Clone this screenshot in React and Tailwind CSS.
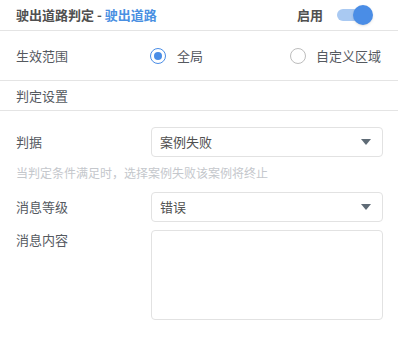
import React, { useState } from 'react';

const App = () => {
  const [enabled, setEnabled] = useState(true);
  const [scope, setScope] = useState('global');

  return (
    <div
      className="w-[398px] h-[337px] bg-white text-[13px] text-[#55595f]"
      style={{ fontFamily: '"Noto Sans CJK SC", "Noto Sans", sans-serif' }}
    >
      {/* header */}
      <div className="h-[31px] flex items-center justify-between pl-4 pr-[24px] border-b border-[#e4e4e4]">
        <div className="font-bold text-[#505050]">
          驶出道路判定 - <span className="text-[#4a90e2]">驶出道路</span>
        </div>
        <div className="flex items-center gap-[14px]">
          <span className="font-bold text-[#505050]">启用</span>
          <button
            onClick={() => setEnabled(!enabled)}
            className="relative w-[37px] h-[20px] flex items-center"
          >
            <span className={`block w-[31px] h-[12px] rounded-full ${enabled ? 'bg-[#a9c9f2]' : 'bg-[#d0d0d0]'}`} />
            <span
              className={`absolute top-0 w-[20px] h-[20px] rounded-full shadow ${enabled ? 'left-[16px] bg-[#4a8de6]' : 'left-0 bg-[#f5f5f5]'}`}
            />
          </button>
        </div>
      </div>

      {/* scope */}
      <div className="h-[50px] flex items-center pl-4 pr-4 border-b border-[#e4e4e4]">
        <span className="w-[134px]">生效范围</span>
        <label className="flex items-center gap-[11px] cursor-pointer" onClick={() => setScope('global')}>
          <span className={`w-[16px] h-[16px] rounded-full border-[1.5px] flex items-center justify-center ${scope === 'global' ? 'border-[#4a8de6]' : 'border-[#bdbdbd]'}`}>
            {scope === 'global' && <span className="w-[8px] h-[8px] rounded-full bg-[#4a8de6]" />}
          </span>
          <span>全局</span>
        </label>
        <label className="ml-auto mr-[1px] flex items-center gap-[10px] cursor-pointer" onClick={() => setScope('custom')}>
          <span className={`w-[16px] h-[16px] rounded-full border-[1.5px] flex items-center justify-center ${scope === 'custom' ? 'border-[#4a8de6]' : 'border-[#bdbdbd]'}`}>
            {scope === 'custom' && <span className="w-[8px] h-[8px] rounded-full bg-[#4a8de6]" />}
          </span>
          <span>自定义区域</span>
        </label>
      </div>

      {/* section title */}
      <div className="h-[30px] flex items-center pl-4 border-b border-[#e4e4e4]">
        <span>判定设置</span>
      </div>

      {/* form */}
      <div className="pl-4 pr-[15px] pt-[16px]">
        <div className="flex items-center">
          <span className="w-[135px]">判据</span>
          <div className="flex-1 h-[30px] border border-[#e2e2e2] rounded-[4px] flex items-center justify-between pl-[8px] pr-[11px] text-[#505050]">
            <span>案例失败</span>
            <svg width="10" height="6" viewBox="0 0 10 6"><path d="M0 0 H10 L5 6 Z" fill="#5f6b76" /></svg>
          </div>
        </div>
        <div className="mt-[7px] text-[12px] text-[#c4c7cc]">当判定条件满足时，选择案例失败该案例将终止</div>

        <div className="flex items-center mt-[10px]">
          <span className="w-[135px]">消息等级</span>
          <div className="flex-1 h-[30px] border border-[#e2e2e2] rounded-[4px] flex items-center justify-between pl-[8px] pr-[11px] text-[#505050]">
            <span>错误</span>
            <svg width="10" height="6" viewBox="0 0 10 6"><path d="M0 0 H10 L5 6 Z" fill="#5f6b76" /></svg>
          </div>
        </div>

        <div className="flex items-start mt-[8px]">
          <span className="w-[135px]">消息内容</span>
          <textarea className="flex-1 h-[90px] border border-[#e2e2e2] rounded-[4px] resize-none outline-none p-2" />
        </div>
      </div>
    </div>
  );
};

export default App;
